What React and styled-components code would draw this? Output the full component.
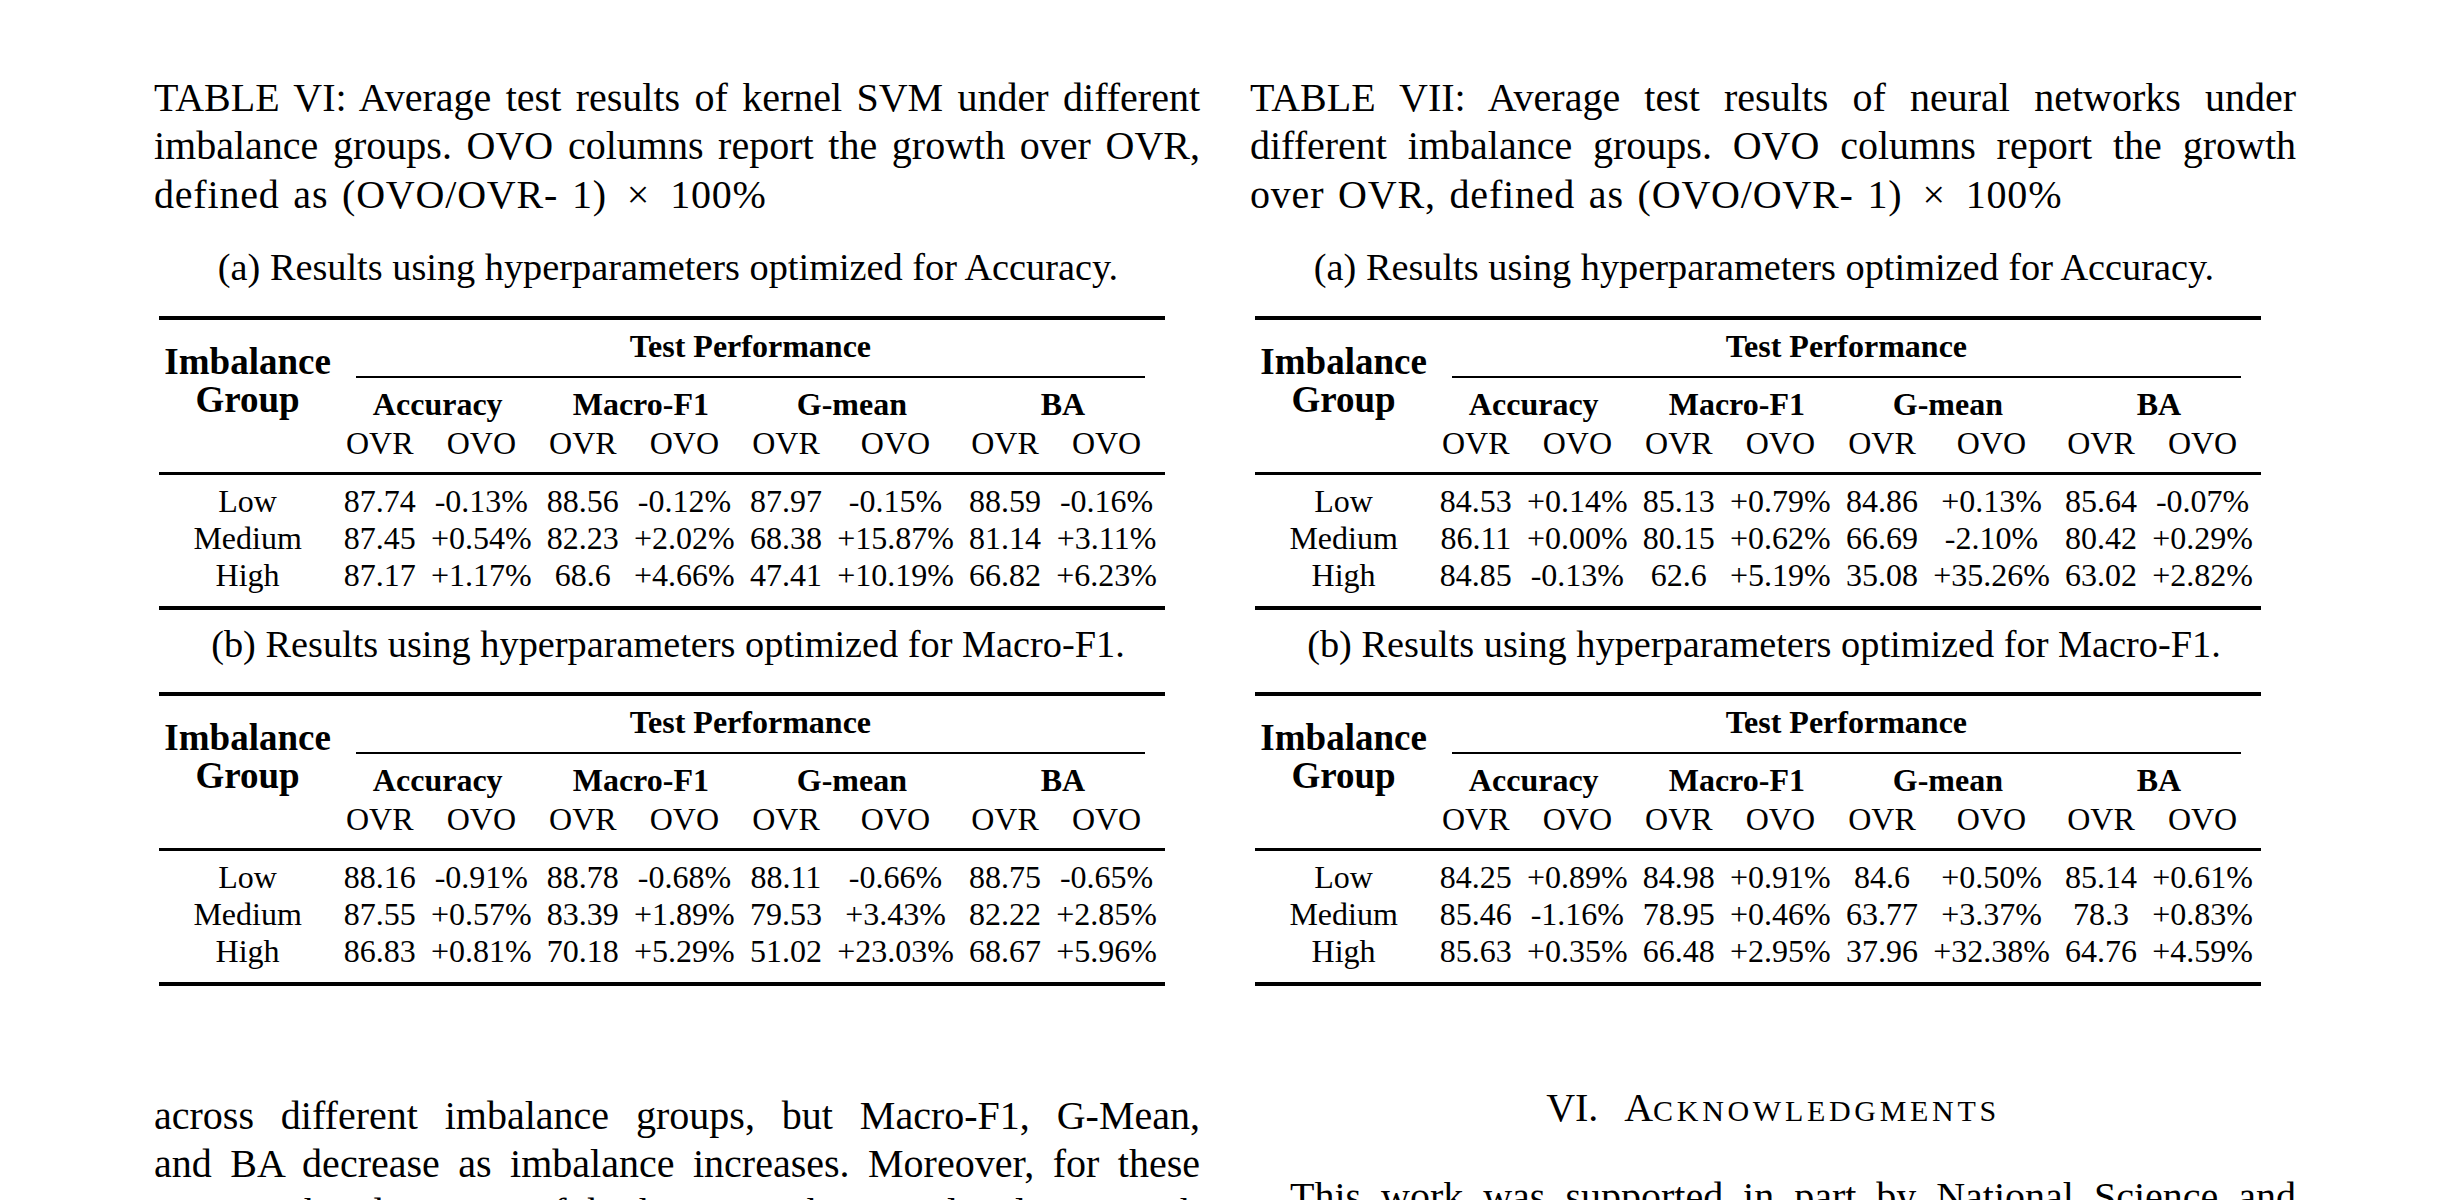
import React from "react";
import styled, { createGlobalStyle } from "styled-components";

const GlobalStyle = createGlobalStyle`
  html, body {
    margin: 0;
    padding: 0;
    background: #ffffff;
    width: 2450px;
    height: 1200px;
    overflow: hidden;
  }
  body {
    font-family: "Liberation Serif", "Times New Roman", serif;
    color: #000000;
  }
`;

const COLS =
  "177.2px 87.2px 115.9px 87.2px 115.9px 87.2px 131.9px 87.2px 115.9px";

const Page = styled.div`
  display: flex;
  align-items: flex-start;
  gap: 50px;
  padding: 74px 0 0 154px;
  width: 2450px;
  height: 1200px;
  box-sizing: border-box;
`;

const Column = styled.div`
  width: 1046px;
  display: flex;
  flex-direction: column;
`;

const TextBlock = styled.div`
  font-size: 40px;
  line-height: 48.3px;
  margin-top: ${(p) => p.$top || 0}px;
`;

const Line = styled.div`
  text-align: ${(p) => (p.$justify ? "justify" : "left")};
  text-align-last: ${(p) => (p.$justify ? "justify" : "left")};
  text-indent: ${(p) => p.$indent || 0}px;
  word-spacing: ${(p) => p.$wordSpacing || 0}px;
  letter-spacing: ${(p) => p.$tracking || 0}px;
  white-space: nowrap;
`;

const MathOp = styled.span`
  margin: 0 20px;
`;

const Heading = styled.div`
  font-size: 40px;
  line-height: 48.3px;
  text-align: center;
  margin-top: ${(p) => p.$top || 0}px;
`;

const SecNum = styled.span`
  margin-right: 18px;
`;

const SmallCaps = styled.span`
  font-size: 30px;
  text-transform: uppercase;
  letter-spacing: 3.7px;
`;

const SubFigure = styled.div`
  width: 1028px;
  display: flex;
  flex-direction: column;
  margin-top: ${(p) => p.$top}px;
`;

const SubCaption = styled.div`
  font-size: 38.3px;
  line-height: 46px;
  text-align: center;
  margin-bottom: 25.5px;
  white-space: nowrap;
`;

const Table = styled.div`
  margin-left: 5px;
  width: 1006px;
`;

const Rule = styled.div`
  height: ${(p) => p.$h}px;
  background: #000000;
`;

const HeadGrid = styled.div`
  display: grid;
  grid-template-columns: ${COLS};
  grid-template-rows: 56px 2px 42px 52px;
  font-size: 32px;
  line-height: 32px;
`;

const GroupHead = styled.div`
  grid-column: 1;
  grid-row: 1 / -1;
  font-size: 37px;
  line-height: 38px;
  font-weight: 700;
  text-align: center;
  padding-top: 23px;
`;

const SpanHead = styled.div`
  grid-column: 2 / -1;
  grid-row: 1;
  font-weight: 700;
  text-align: center;
  padding-top: 10px;
`;

const CMidRule = styled.div`
  grid-column: 2 / -1;
  grid-row: 2;
  margin: 0 20px;
  background: #000000;
`;

const MetricHead = styled.div`
  grid-column: span 2;
  grid-row: 3;
  font-weight: 700;
  text-align: center;
  padding-top: 10px;
  white-space: nowrap;
`;

const SubHead = styled.div`
  grid-row: 4;
  text-align: center;
  padding-top: 7px;
`;

const BodyGrid = styled.div`
  display: grid;
  grid-template-columns: ${COLS};
  font-size: 32px;
  line-height: 37px;
  padding: 8px 0 12px;
`;

const Cell = styled.div`
  text-align: center;
  white-space: nowrap;
`;

const METRICS = ["Accuracy", "Macro-F1", "G-mean", "BA"];

function ResultTable({ rows }) {
  return (
    <Table>
      <Rule $h={4} />
      <HeadGrid>
        <GroupHead>
          Imbalance
          <br />
          Group
        </GroupHead>
        <SpanHead>Test Performance</SpanHead>
        <CMidRule />
        {METRICS.map((m) => (
          <MetricHead key={m}>{m}</MetricHead>
        ))}
        {METRICS.map((m) => (
          <React.Fragment key={m}>
            <SubHead>OVR</SubHead>
            <SubHead>OVO</SubHead>
          </React.Fragment>
        ))}
      </HeadGrid>
      <Rule $h={3} />
      <BodyGrid>
        {rows.map((r) =>
          r.map((v, i) => <Cell key={r[0] + i}>{v}</Cell>)
        )}
      </BodyGrid>
      <Rule $h={4} />
    </Table>
  );
}

const SVM_A = [
  ["Low", "87.74", "-0.13%", "88.56", "-0.12%", "87.97", "-0.15%", "88.59", "-0.16%"],
  ["Medium", "87.45", "+0.54%", "82.23", "+2.02%", "68.38", "+15.87%", "81.14", "+3.11%"],
  ["High", "87.17", "+1.17%", "68.6", "+4.66%", "47.41", "+10.19%", "66.82", "+6.23%"],
];
const SVM_B = [
  ["Low", "88.16", "-0.91%", "88.78", "-0.68%", "88.11", "-0.66%", "88.75", "-0.65%"],
  ["Medium", "87.55", "+0.57%", "83.39", "+1.89%", "79.53", "+3.43%", "82.22", "+2.85%"],
  ["High", "86.83", "+0.81%", "70.18", "+5.29%", "51.02", "+23.03%", "68.67", "+5.96%"],
];
const NN_A = [
  ["Low", "84.53", "+0.14%", "85.13", "+0.79%", "84.86", "+0.13%", "85.64", "-0.07%"],
  ["Medium", "86.11", "+0.00%", "80.15", "+0.62%", "66.69", "-2.10%", "80.42", "+0.29%"],
  ["High", "84.85", "-0.13%", "62.6", "+5.19%", "35.08", "+35.26%", "63.02", "+2.82%"],
];
const NN_B = [
  ["Low", "84.25", "+0.89%", "84.98", "+0.91%", "84.6", "+0.50%", "85.14", "+0.61%"],
  ["Medium", "85.46", "-1.16%", "78.95", "+0.46%", "63.77", "+3.37%", "78.3", "+0.83%"],
  ["High", "85.63", "+0.35%", "66.48", "+2.95%", "37.96", "+32.38%", "64.76", "+4.59%"],
];

function Figure({ lines, lead, a, b }) {
  return (
    <>
      <TextBlock>
        <Line $justify>{lines[0]}</Line>
        <Line $justify>{lines[1]}</Line>
        <Line $wordSpacing={3} $tracking={0.8}>
          {lead}defined as (OVO/OVR- 1)<MathOp>×</MathOp>100%
        </Line>
      </TextBlock>
      <SubFigure $top={25.3}>
        <SubCaption>(a) Results using hyperparameters optimized for Accuracy.</SubCaption>
        <ResultTable rows={a} />
      </SubFigure>
      <SubFigure $top={11.2}>
        <SubCaption>(b) Results using hyperparameters optimized for Macro-F1.</SubCaption>
        <ResultTable rows={b} />
      </SubFigure>
    </>
  );
}

export default function App() {
  return (
    <>
      <GlobalStyle />
      <Page>
        <Column>
          <Figure
            lines={[
              "TABLE VI: Average test results of kernel SVM under different",
              "imbalance groups. OVO columns report the growth over OVR,",
            ]}
            lead=""
            a={SVM_A}
            b={SVM_B}
          />
          <TextBlock $top={105.6}>
            <Line $justify>across different imbalance groups, but Macro-F1, G-Mean,</Line>
            <Line $justify>and BA decrease as imbalance increases. Moreover, for these</Line>
            <Line $justify>metrics the deviation of both approaches is also larger with</Line>
          </TextBlock>
        </Column>
        <Column>
          <Figure
            lines={[
              "TABLE VII: Average test results of neural networks under",
              "different imbalance groups. OVO columns report the growth",
            ]}
            lead="over OVR, "
            a={NN_A}
            b={NN_B}
          />
          <Heading $top={97.6}>
            <SecNum>VI.</SecNum> A<SmallCaps>cknowledgments</SmallCaps>
          </Heading>
          <TextBlock $top={38}>
            <Line $justify $indent={40}>
              This work was supported in part by National Science and
            </Line>
          </TextBlock>
        </Column>
      </Page>
    </>
  );
}
